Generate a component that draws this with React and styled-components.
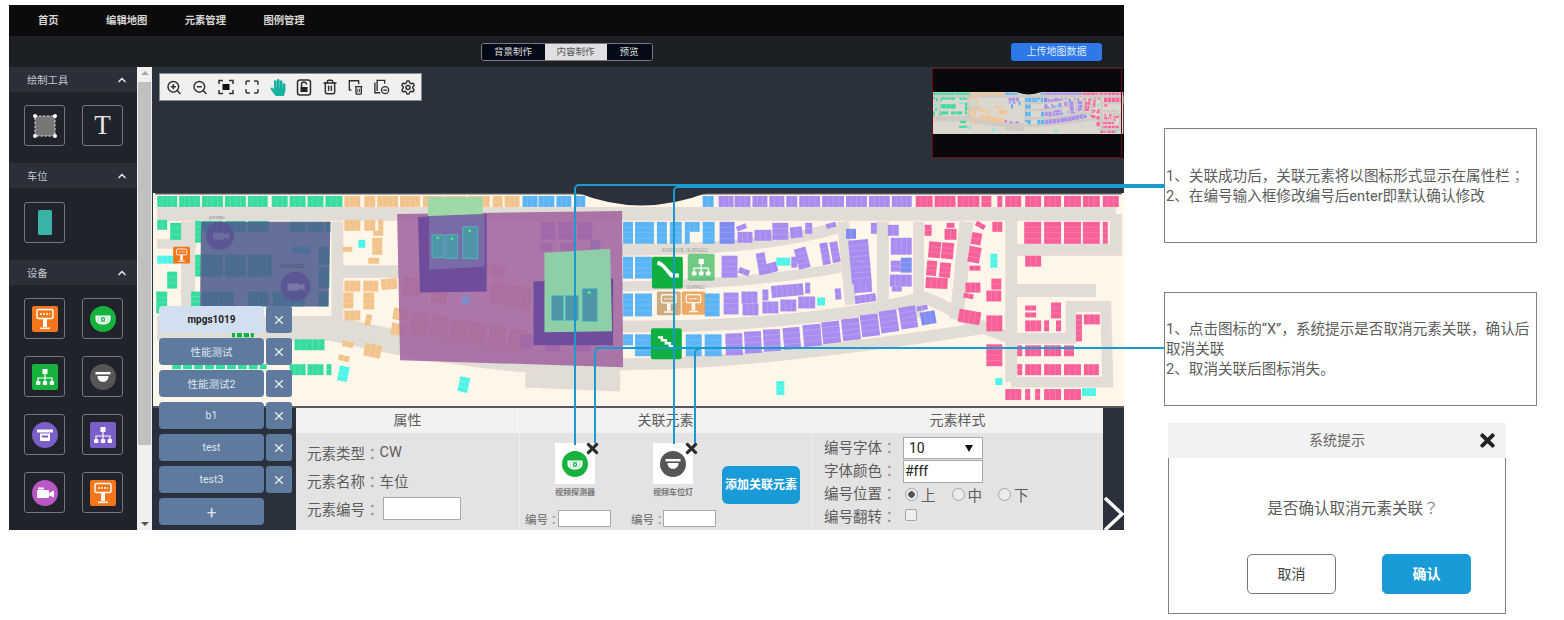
import { Fragment } from 'react'
import styled, { createGlobalStyle } from 'styled-components'
import { ZoomIn, ZoomOut, Maximize, Trash2, Settings, X, ChevronUp } from 'lucide-react'
import { FaHandPaper, FaTimes } from 'react-icons/fa'

const GlobalStyle = createGlobalStyle`
  html, body { margin: 0; padding: 0; background: #fff; overflow: hidden; }
  * { box-sizing: border-box; }
  body { font-family: Roboto, "Noto Sans CJK SC", sans-serif; }
`

const Page = styled.div`
  position: relative;
  width: 1564px;
  height: 620px;
  display: flex;
  align-items: flex-start;
  padding: 5px 0 0 9px;
`

const AppWindow = styled.div`
  width: 1115px;
  height: 525px;
  display: flex;
  flex-direction: column;
  overflow: hidden;
  flex: none;
`

const TopNav = styled.div`
  height: 31px;
  background: #0b0b0b;
  display: flex;
  align-items: center;
  gap: 37.5px;
  padding: 0 0 2px 29px;
  flex: none;
`

const NavItem = styled.div`
  color: #d6d6d6;
  font-size: 10.3px;
  font-weight: 700;
  &:first-child { margin-right: 10px; }
`

const SubBar = styled.div`
  height: 31px;
  background: #1c1f24;
  display: grid;
  grid-template-columns: 1fr auto 1fr;
  align-items: center;
  flex: none;
`

const Segments = styled.div`
  grid-column: 2;
  display: flex;
  height: 18px;
  border: 1px solid #77797e;
  border-radius: 3px;
  overflow: hidden;
`

const Segment = styled.div`
  width: ${p => p.$w}px;
  background: ${p => (p.$on ? '#e0e0e2' : '#040a16')};
  color: ${p => (p.$on ? '#555' : '#ddd')};
  font-size: 9.5px;
  line-height: 16px;
  text-align: center;
`

const UploadButton = styled.div`
  justify-self: end;
  width: 91px;
  height: 18px;
  margin-right: 22px;
  border-radius: 3px;
  background: #2f78e8;
  color: #dfe9fb;
  font-size: 10px;
  line-height: 18px;
  text-align: center;
`

const Main = styled.div`
  flex: 1;
  display: flex;
  min-height: 0;
`

const Sidebar = styled.div`
  width: 128px;
  background: #20232b;
  overflow: hidden;
  flex: none;
`

const SectionHead = styled.div`
  height: 25px;
  background: #2b2f3a;
  color: #c4c6cb;
  font-size: 10.3px;
  display: flex;
  align-items: center;
  justify-content: space-between;
  padding: 0 9px 0 18px;
`

const TileGrid = styled.div`
  display: grid;
  grid-template-columns: 41px 41px;
  column-gap: 17px;
  row-gap: 17px;
  padding: ${p => p.$top || 13}px 0 17px 15px;
`

const Tile = styled.div`
  width: 41px;
  height: 41px;
  border: 1px solid #75777c;
  border-radius: 3px;
  display: flex;
  align-items: center;
  justify-content: center;
  color: #e4e4e4;
  font-family: "Liberation Serif", serif;
  font-size: 27px;
  line-height: 1;
`

const Scrollbar = styled.div`
  width: 15px;
  background: #f0f0f0;
  display: flex;
  flex-direction: column;
  align-items: center;
  flex: none;
  padding-top: 4px;
`

const ScrollUp = styled.div`
  width: 0;
  height: 0;
  border-left: 4px solid transparent;
  border-right: 4px solid transparent;
  border-bottom: 4px solid #a8a8a8;
`

const ScrollThumb = styled.div`
  width: 13px;
  height: 363px;
  margin-top: 7px;
  background: #c0c0c0;
`

const ScrollDown = styled.div`
  width: 0;
  height: 0;
  margin-top: 77px;
  border-left: 4px solid transparent;
  border-right: 4px solid transparent;
  border-top: 4px solid #555;
`

const Canvas = styled.div`
  position: relative;
  flex: 1;
  background: #2b303d;
  padding: 126px 0 0 1px;
  display: flex;
  flex-direction: column;
  min-width: 0;
`

const Toolbar = styled.div`
  position: absolute;
  left: 7px;
  top: 6px;
  width: 263px;
  height: 28px;
  background: #f0f0f0;
  border: 1px solid #8b8b8b;
  display: flex;
  align-items: center;
  justify-content: space-between;
  padding: 0 5px 0 6px;
  color: #2f2f2f;
`

const ToolSlot = styled.div`
  width: 16px;
  height: 18px;
  display: flex;
  align-items: center;
  justify-content: center;
  flex: none;
`

const MiniMap = styled.div`
  position: absolute;
  left: 780px;
  top: 1px;
  width: 192px;
  height: 90px;
  background: #07080b;
  display: flex;
  align-items: center;
  &::after {
    content: '';
    position: absolute;
    left: 0;
    top: 0;
    right: 2px;
    bottom: 0;
    border: 1px solid #6a0c10;
  }
`

const MapFrame = styled.div`
  height: 215px;
  flex: none;
  background: #fff6ea;
  border-bottom: 2px solid #55565a;
  svg { display: block; }
`

const BottomRow = styled.div`
  flex: 1;
  display: flex;
  align-items: flex-end;
  padding-left: 143px;
  min-height: 0;
`

const Panel = styled.div`
  width: 807px;
  height: 122px;
  display: grid;
  grid-template-columns: 223px 292px 292px;
  color: #5c5c5c;
  font-size: 14.5px;
  flex: none;
`

const PanelColumn = styled.div`
  background: #e3e3e3;
  border-left: ${p => (p.$first ? 'none' : '1px solid #efefef')};
  min-width: 0;
`

const PanelTitle = styled.div`
  height: 25px;
  background: #f2f2f2;
  font-size: 14px;
  line-height: 24px;
  text-align: center;
`

const Colon = styled.span`
  font-family: "Noto Sans CJK TC", sans-serif;
  color: #8a8a8a;
`

const InfoBody = styled.div`
  padding: 5px 0 0 11px;
`

const InfoRow = styled.div`
  height: 28px;
  display: flex;
  align-items: center;
`

const Field = styled.div`
  width: ${p => p.$w}px;
  height: ${p => p.$h}px;
  margin-left: ${p => p.$ml || 0}px;
  background: #fff;
  border: 1px solid #a9a9a9;
  color: #222;
  font-size: 14px;
  line-height: ${p => p.$h - 2}px;
  padding-left: ${p => p.$pad || 0}px;
  flex: none;
  display: flex;
  align-items: center;
  justify-content: space-between;
`

const LinkedBody = styled.div`
  position: relative;
  height: 97px;
  display: flex;
  padding: 10px 0 0 5px;
`

const LinkedItem = styled.div`
  width: 106px;
  display: flex;
  flex-direction: column;
  flex: none;
`

const ThumbBox = styled.div`
  position: relative;
  width: 40px;
  height: 41px;
  margin-left: ${p => p.$ml}px;
  background: #fff;
  display: flex;
  align-items: center;
  justify-content: center;
`

const ThumbClose = styled(FaTimes)`
  position: absolute;
  right: ${p => p.$r}px;
  top: -3px;
  font-size: 17px;
  color: #2d2d2d;
`

const ThumbLabel = styled.div`
  width: 44px;
  margin: 3px 0 0 ${p => p.$ml}px;
  font-size: 8px;
  line-height: 12px;
  font-weight: 700;
  color: #777;
  text-align: center;
  white-space: nowrap;
`

const CodeRow = styled.div`
  display: flex;
  align-items: center;
  margin-top: 11px;
  font-size: 11.5px;
  color: #666;
  white-space: nowrap;
`

const AddButton = styled.div`
  position: absolute;
  left: 202px;
  top: 33px;
  width: 78px;
  height: 38px;
  border-radius: 6px;
  background: #189bd6;
  color: #fff;
  font-size: 12px;
  font-weight: 700;
  line-height: 38px;
  text-align: center;
  white-space: nowrap;
`

const StyleBody = styled.div`
  padding: 4px 0 0 12px;
`

const StyleRow = styled.div`
  height: ${p => p.$h}px;
  display: flex;
  align-items: center;
`

const StyleLabel = styled.div`
  width: 79px;
  padding-bottom: 4px;
  flex: none;
`

const Caret = styled.span`
  width: 0;
  height: 0;
  margin-right: 9px;
  border-left: 4px solid transparent;
  border-right: 4px solid transparent;
  border-top: 7px solid #111;
`

const Radio = styled.span`
  width: 13px;
  height: 13px;
  border-radius: 50%;
  border: 1px solid #a6a6a6;
  background: ${p => (p.$on ? 'radial-gradient(circle, #555 0 3px, #ececec 3.5px)' : '#ececec')};
  margin: 0 3px 0 ${p => p.$left}px;
  flex: none;
`

const CheckBox = styled.span`
  width: 12px;
  height: 12px;
  border-radius: 2px;
  border: 1px solid #a6a6a6;
  background: #efefef;
  margin-left: 2px;
  margin-top: -4px;
`

const NextArrow = styled.svg`
  width: 21px;
  height: 33px;
  flex: none;
`

const LayerList = styled.div`
  position: absolute;
  left: 7px;
  top: 239px;
  display: grid;
  grid-template-columns: 105px 26px;
  column-gap: 2px;
  grid-auto-rows: 27px;
  row-gap: 5px;
`

const LayerName = styled.div`
  border-radius: 4px;
  background: ${p => (p.$on ? '#d2dff0' : '#5f7a9f')};
  color: ${p => (p.$on ? '#222' : '#dfe5ee')};
  font-size: ${p => p.$size || 10.5}px;
  font-weight: ${p => (p.$on ? 700 : 400)};
  display: flex;
  align-items: center;
  justify-content: center;
`

const LayerDelete = styled.div`
  border-radius: 3px;
  background: #5f7a9f;
  color: #eef1f5;
  display: flex;
  align-items: center;
  justify-content: center;
`

const Notes = styled.div`
  width: 373px;
  margin: 123px 0 0 40px;
  display: flex;
  flex-direction: column;
  flex: none;
`

const Note = styled.div`
  width: 373px;
  height: ${p => p.$h}px;
  margin-bottom: ${p => p.$mb}px;
  border: 1px solid #808080;
  display: flex;
  align-items: center;
  padding: 0 1px;
  font-size: 14.6px;
  line-height: 20px;
  color: #5c5c5c;
`

const Dialog = styled.div`
  width: 338px;
  margin-left: 4px;
`

const DialogHead = styled.div`
  position: relative;
  height: 35px;
  background: #f2f2f2;
  color: #666;
  font-size: 14px;
  line-height: 35px;
  text-align: center;
`

const DialogClose = styled(FaTimes)`
  position: absolute;
  right: 8px;
  top: 7px;
  font-size: 21px;
  color: #222;
`

const DialogBody = styled.div`
  height: 156px;
  border: 1px solid #808080;
  border-top: none;
  display: flex;
  flex-direction: column;
  align-items: center;
  padding: 37px 0 0 32px;
  color: #5c5c5c;
  font-size: 15.6px;
  line-height: 24px;
`

const DialogActions = styled.div`
  display: flex;
  gap: 46px;
  margin: 33px 0 0 12px;
`

const DialogButton = styled.div`
  width: 89px;
  height: 40px;
  border-radius: 5px;
  border: 1px solid ${p => (p.$primary ? '#189bd6' : '#777')};
  background: ${p => (p.$primary ? '#189bd6' : '#fff')};
  color: ${p => (p.$primary ? '#fff' : '#444')};
  font-size: 14px;
  font-weight: ${p => (p.$primary ? 700 : 400)};
  line-height: 38px;
  text-align: center;
`

const CallLines = styled.svg`
  position: absolute;
  left: 0;
  top: 0;
  pointer-events: none;
`

/* parking blocks, page coordinates: x, y, w, h, rotation */
const greens = [
  [155,196,20,11],[177,196,21,11],[200,196,21,11],[223,196,21,11],[246,196,20,11],[270,196,16,11],[288,196,16,11],[306,196,16,11],[324,196,17,11],
  [155,220,10,10],[168,223,11,17],[193,221,6,22],[193,255,6,22],[200,221,21,11],[223,221,21,11],[246,221,21,11],[288,222,16,10],[306,222,16,10],[324,222,5,10],
  [200,255,21,22],[223,255,21,22],[246,255,24,22],[317,247,11,18],[317,267,11,21],[200,292,32,15],[246,292,21,15],[271,292,15,15],[287,292,16,15],[317,292,10,15],
  [165,272,10,17],[154,292,11,22],[189,292,9,20],[293,340,30,11],[288,365,16,11],[306,365,16,11],[325,365,5,11],
]
const oranges = [
  [343,196,16,11],[363,196,11,11],[376,196,21,11],[399,196,20,11],[422,196,20,11],[443,196,22,11],[467,196,22,11],[492,196,10,11],[504,196,15,11],
  [343,220,16,11],[363,220,11,11],[377,220,5,11],[372,231,10,5],[371,238,10,17],[367,258,11,6],[341,247,10,5],[343,281,16,11],[362,281,15,11],[380,279,16,11,-6],
  [342,293,10,16],[362,293,11,17],[343,311,16,10],[364,315,6,11,12],[341,342,11,6,12],[337,356,11,6,12],[363,345,17,13,12],
  [392,309,14,12,10],[390,324,14,12,10],[410,313,17,23,8],[430,316,17,23,8],[450,320,17,23,8],[468,323,17,23,8],[488,326,17,23,8],[508,330,17,23,8],
  [402,277,18,20,5],[430,290,16,14,5],[470,262,18,12,5],[490,266,14,12,5],[490,284,30,22,6],[520,287,10,24],
]
const blues = [
  [522,196,15,11],[538,196,16,11],[556,196,15,11],[574,196,11,11],[703,196,11,11],
  [623,222,10,22],[635,222,19,22],[657,222,10,22],[670,222,12,22],[685,222,15,10],[685,232,5,12],[703,222,12,22],
  [623,257,10,22],[635,257,17,22],[623,294,10,23],[635,294,17,23],[705,294,15,23],[623,335,10,11],[635,335,17,22],[686,335,16,22],[705,335,17,22],[552,255,10,22],[590,240,10,20],
]
const purples = [
  [719,196,15,11],[735,196,16,11],[753,196,15,11],[770,196,15,11],[787,196,11,11],[800,196,21,11],[823,196,22,11],[847,196,21,11],[870,196,21,11],[893,196,20,11],
  [737,225,10,5,-20],[738,232,15,11],[755,230,17,11],[773,223,16,17],[791,227,12,11,-6],[806,223,7,11],[827,223,10,5,-15],
  [722,256,16,22],[739,269,11,6,20],[758,253,9,22,-10],[767,263,11,10,-15],[792,257,6,11],[797,248,12,21,-15],[822,243,8,22,-10],[832,242,8,21,-10],
  [724,293,15,22],[742,292,16,12],[743,304,16,12],[763,290,6,11],[763,302,16,12],[781,300,16,12],[799,297,17,12],[772,285,32,12,-5],[806,283,5,11],[836,289,6,11,-5],
  [726,334,17,22,-2],[745,332,17,22,-3],[764,330,17,22,-3],[784,328,17,22,-5],[804,325,18,22,-5],[823,322,18,22,-6],[843,319,18,22,-6],[862,315,18,22,-7],[881,311,18,22,-8],[901,307,17,22,-9],[918,306,11,5,-12],
  [872,223,6,11],[850,240,20,22,-5],[852,262,20,22,-5],[855,283,18,10,-5],[856,295,21,8,-8],[889,225,11,11],[892,238,21,17],[892,261,10,11],[891,275,22,12],[893,287,10,5],
  [540,222,15,18],[558,222,15,18],[577,222,15,18],[540,243,12,8],[560,243,14,10],[520,335,12,14],[545,342,15,10],[575,342,16,10],
]
const deepBlues = [[720,222,15,22],[847,229,10,10],[902,258,11,15],[922,312,15,13,-10]]
const pinks = [
  [917,196,17,11],[936,196,21,11],[959,196,22,11],[983,196,10,11],[999,196,5,11],[1007,196,16,11],[1027,196,16,11],[1046,196,17,11],[1066,196,17,11],[1085,196,17,11],[1105,196,16,11],
  [926,225,7,11],[948,223,8,5],[946,229,12,11],[930,242,12,16,5],[943,243,12,16,5],[928,261,10,15,5],[941,263,11,15,5],[927,278,22,11,3],
  [973,233,10,12,10],[970,247,12,16,10],[971,266,11,5],[977,223,10,5,30],[994,222,10,10],[967,283,15,10],[965,294,10,5,10],[993,279,10,11],[988,291,15,11],[960,311,22,13,10],[988,316,16,16],[988,345,16,22],
  [1026,222,17,22],[1046,222,17,22],[1066,222,17,22],[1085,222,17,22],[1105,222,5,22],[1027,256,16,11],[1027,306,11,5],[1027,313,11,5],[1027,321,16,11],[1046,321,5,11],[1053,303,10,16],[1058,321,5,11],[1078,315,6,27],[1086,315,16,10],
  [1019,346,5,11],[1027,346,16,11],[1046,346,17,11],[1066,346,10,11],[1019,365,5,11],[1027,365,16,11],[1046,365,17,11],[1066,365,17,11],[1086,365,15,11],
  [1007,390,16,11],[1027,390,5,11],[1037,390,5,11],[1046,390,17,11],[1066,390,17,11],
]
const cyans = [
  [155,256,20,8],[357,240,7,8],[337,367,10,15,12],[458,378,10,15,12],[777,258,14,8],[818,298,8,8],[992,254,7,14],[997,379,7,7],[777,382,8,14],[1084,389,14,8],[290,247,19,7],
]
const roads = [
  ['M155 214H1118', 13],['M1118 214V250H1012', 11],['M1013 214V383', 11],['M1018 291H1098', 12],['M1018 339H1073V307H1108L1110 383H1013', 10],
  ['M620 250C700 250 780 245 838 228', 11],['M620 287C700 285 780 280 842 268', 9],['M620 327C720 328 840 320 925 298C950 305 970 325 1008 337', 11],
  ['M620 365C720 365 850 350 990 328', 11],['M844 222L852 305', 11],['M884 222V312', 11],['M920 222V318', 10],['M968 222L958 320', 13],
  ['M186 222V330', 13],['M336 222V320', 11],['M340 272H398', 12],['M155 329H330C400 345 500 365 620 365', 24],['M525 381L620 385', 14],['M155 244H194', 9],
]

const blockGroup = (list, color, prefix) =>
  list.map(([x, y, w, h, r], i) => {
    const cells = Math.max(1, Math.round(Math.max(w, h) / 5.5))
    const wide = w >= h
    return (
      <g key={prefix + i} transform={r ? `rotate(${r} ${x + w / 2} ${y + h / 2})` : undefined}>
        <rect x={x} y={y} width={w} height={h} fill={color} />
        {Array.from({ length: cells - 1 }, (_, k) =>
          wide ? (
            <line key={k} x1={x + ((k + 1) * w) / cells} x2={x + ((k + 1) * w) / cells} y1={y} y2={y + h} stroke="#fff" strokeOpacity="0.28" strokeWidth="0.6" />
          ) : (
            <line key={k} y1={y + ((k + 1) * h) / cells} y2={y + ((k + 1) * h) / cells} x1={x} x2={x + w} stroke="#fff" strokeOpacity="0.28" strokeWidth="0.6" />
          )
        )}
      </g>
    )
  })

const TealBox = ({ x, y, w, h }) => <rect x={x} y={y} width={w} height={h} fill="#4f95a8" stroke="#4cc0c8" strokeWidth="0.8" />

function MapOverlays() {
  return (
    <>
      <polygon points="199,222 329,222 327,307 198,307" fill="#4f5c8e" fillOpacity="0.88" />
      <text x="278" y="268" fontSize="5.5" fill="#4a4f6a" fontFamily="Roboto, sans-serif">A1010002</text>
      <text x="207" y="219" fontSize="3.5" fill="#777" fontFamily="Roboto, sans-serif">A1010001</text>
      <circle cx="218" cy="236" r="14" fill="#5a4f92" fillOpacity="0.75" />
      <path d="M211 233h11v7h-11zM222 235l5-2v7l-5-2z" fill="#6b6da0" />
      <circle cx="294" cy="287" r="15" fill="#5a4f92" fillOpacity="0.75" />
      <path d="M286 284h12v7h-12zM298 286l5-2v7l-5-2z" fill="#7777a8" />

      <polygon points="396,214 622,211 623,368 399,361" fill="#a0649f" fillOpacity="0.88" />
      <polygon points="417,217 486,214 486,292 419,293" fill="#6f4d9c" />
      <polygon points="428,216 484,214 484,267 428,270" fill="#7a6aa6" />
      <polygon points="427,197 482,197 482,214 427,216" fill="#9fd9a8" />
      <TealBox x={431} y={235} w={12} h={23} />
      <TealBox x={445} y={235} w={12} h={24} />
      <TealBox x={462} y={227} w={15} h={32} />
      <circle cx="437" cy="238" r="1.4" fill="#5fe07a" />
      <circle cx="451" cy="239" r="1.4" fill="#5fe07a" />
      <circle cx="469" cy="231" r="1.6" fill="#5fe07a" />
      <polygon points="533,282 613,279 613,346 533,346" fill="#6f4d9c" />
      <polygon points="544,253 610,249 612,332 544,333" fill="#8fcfa8" />
      <TealBox x={551} y={296} w={12} h={25} />
      <TealBox x={565} y={296} w={13} h={25} />
      <TealBox x={582} y={289} w={15} h={33} />
      <circle cx="589" cy="293" r="1.8" fill="#5fe07a" />
      <rect x="461" y="296" width="8" height="9" fill="#7f8cc8" />

      <rect x="230" y="332" width="22" height="6" fill="#10b040" />
      <path d="M234 332v6M241 332v6M248 332v6" stroke="#fff" strokeWidth="1.5" />
      <path d="M170 367.5H265" stroke="#36dca0" strokeWidth="5" strokeDasharray="9 2" />

      <g transform="translate(171 247) scale(0.65)"><KioskIcon color="#f5761a" /></g>
      <text x="662" y="252" fontSize="4.5" fill="#999" fontFamily="Roboto, sans-serif">A1408YCB, 16-5PGLG2</text>
      <text x="686" y="289" fontSize="4.5" fill="#999" fontFamily="Roboto, sans-serif">16-PING2</text>
      <g opacity="0.6" transform="translate(688 254) scale(1.04)"><NetworkIcon color="#10b040" /></g>
      <g opacity="0.55" transform="translate(657 292) scale(0.92)"><KioskIcon color="#a7702e" /></g>
      <g opacity="0.7" transform="translate(682 292) scale(0.9)"><KioskIcon color="#e88a2c" /></g>
      <rect x="652" y="257" width="31" height="32" rx="2" fill="#10b040" />
      <path d="M657 265c5 0 10 9 14 13h8v-4h-6c-4-3-9-12-15-13z" fill="#fff" />
      <rect x="651" y="329" width="31" height="31" rx="2" fill="#10b040" />
      <path d="M658 338h4v3h4v3h4v3h4v3" fill="none" stroke="#fff" strokeWidth="2.4" />
    </>
  )
}

function MapDrawing({ width, height, plain }) {
  return (
    <svg width={width} height={height} viewBox="153 193 971 214">
      <rect x="153" y="193" width="971" height="214" fill={plain ? '#dcd8cf' : '#fff6ea'} />
      {!plain && <rect x="153" y="193" width="971" height="1.5" fill="#55565a" />}
      {roads.map(([d, w], i) => (
        <path key={'o' + i} d={d} fill="none" stroke={plain ? '#cfcbc4' : '#fbd6cc'} strokeWidth={w + 1} />
      ))}
      {roads.map(([d, w], i) => (
        <path key={'r' + i} d={d} fill="none" stroke={plain ? '#cfcbc4' : '#e0dcd6'} strokeWidth={w} />
      ))}
      <path d="M578 193Q640 218 707 193Z" fill={plain ? '#07080b' : '#2b303d'} />
      {blockGroup(greens, '#36dca0', 'g')}
      {blockGroup(oranges, '#f2c48c', 'o')}
      {blockGroup(blues, '#5ab4f5', 'b')}
      {blockGroup(purples, '#a98cf0', 'p')}
      {blockGroup(deepBlues, '#7f8cf2', 'd')}
      {blockGroup(pinks, '#f8609a', 'k')}
      {blockGroup(cyans, '#4ef5e6', 'c')}
      {!plain && <MapOverlays />}
    </svg>
  )
}

function KioskIcon({ color }) {
  return (
    <>
      <rect width="26" height="26" rx="2" fill={color} />
      <rect x="5" y="3.5" width="16" height="9" rx="1.5" fill="none" stroke="#fff" strokeWidth="1.4" />
      <path d="M8 8h10" stroke="#fff" strokeWidth="1.4" strokeDasharray="2 1" />
      <path d="M11 13h4v8h-4z" fill="#fff" />
      <path d="M8 21.5h10v1.6H8z" fill="#fff" />
    </>
  )
}

function NetworkIcon({ color }) {
  return (
    <>
      <rect width="26" height="26" rx="2" fill={color} />
      <rect x="10.5" y="5" width="5" height="5" fill="#fff" />
      <path d="M13 10v4M6 17v-3h14v3M13 14v3" fill="none" stroke="#fff" strokeWidth="1.2" />
      <rect x="4" y="17" width="4.4" height="4" rx="1" fill="#fff" />
      <rect x="10.8" y="17" width="4.4" height="4" rx="1" fill="#fff" />
      <rect x="17.6" y="17" width="4.4" height="4" rx="1" fill="#fff" />
    </>
  )
}

const DeviceSvg = ({ size = 26, children }) => (
  <svg width={size} height={size} viewBox="0 0 26 26">{children}</svg>
)

const Kiosk = ({ color }) => <DeviceSvg><KioskIcon color={color} /></DeviceSvg>
const Network = ({ color }) => <DeviceSvg><NetworkIcon color={color} /></DeviceSvg>

const CameraDome = ({ size }) => (
  <DeviceSvg size={size}>
    <circle cx="13" cy="13" r="13" fill="#17b23e" />
    <path d="M5.5 9.5h15v3.5c0 3.6-3 5.500-7.500 5.500S5.500 16.600 5.500 13z" fill="#fff" />
    <rect x="8" y="11" width="10" height="5" rx="1" fill="none" stroke="#7fd6a0" strokeWidth="0.8" />
    <circle cx="13" cy="13.5" r="2.2" fill="#17b23e" />
    <circle cx="13" cy="13.5" r="0.9" fill="#fff" />
  </DeviceSvg>
)

const GrayDome = ({ size }) => (
  <DeviceSvg size={size}>
    <circle cx="13" cy="13" r="13" fill="#565656" />
    <rect x="5.5" y="8" width="15" height="2.4" fill="#fff" />
    <path d="M7.5 12h11c0 3.6-2.4 5.8-5.5 5.8S7.5 15.6 7.5 12z" fill="#fff" />
  </DeviceSvg>
)

const PurpleGate = () => (
  <DeviceSvg>
    <circle cx="13" cy="13" r="13" fill="#7b5fc9" />
    <rect x="5" y="7.5" width="16" height="3" fill="#fff" />
    <path d="M8 11.5h10v6.500a1 1 0 0 1-1 1H9a1 1 0 0 1-1-1z" fill="#fff" />
    <rect x="10" y="13.5" width="6" height="2" fill="#7b5fc9" />
  </DeviceSvg>
)

const VideoCam = () => (
  <DeviceSvg>
    <circle cx="13" cy="13" r="13" fill="#b957c4" />
    <rect x="5" y="10" width="12" height="8" rx="1" fill="#fff" />
    <path d="M17 13l5-2.5v7L17 15.5z" fill="#fff" />
    <rect x="6" y="7.5" width="6" height="2" fill="#fff" />
  </DeviceSvg>
)

const SelectShape = () => (
  <svg width="26" height="26" viewBox="0 0 26 26">
    <rect x="3" y="3" width="20" height="20" fill="#777" stroke="#ddd" strokeDasharray="2.5 1.5" />
    {[[3, 3], [23, 3], [3, 23], [23, 23]].map(([cx, cy]) => (
      <circle key={cx + '-' + cy} cx={cx} cy={cy} r="2" fill="#fff" />
    ))}
  </svg>
)

const SlotShape = () => (
  <svg width="14" height="25" viewBox="0 0 14 25">
    <rect width="14" height="25" rx="1.5" fill="#38b3a6" />
  </svg>
)

const FitIcon = () => (
  <svg width="16" height="16" viewBox="0 0 16 16" fill="none" stroke="#2f2f2f" strokeWidth="1.5">
    <path d="M1 5V1.5H5M11 1.5H15V5M15 11V14.5H11M5 14.5H1V11" />
    <rect x="4.5" y="5" width="7" height="6" fill="#111" stroke="none" />
  </svg>
)

const LockIcon = () => (
  <svg width="16" height="17" viewBox="0 0 16 17" fill="none" stroke="#2f2f2f" strokeWidth="1.5">
    <rect x="1.5" y="1" width="13" height="15" rx="2.5" />
    <path d="M5.5 8V5.5a2.5 2.5 0 0 1 5 0" />
    <rect x="4.5" y="8" width="7" height="5" fill="#222" stroke="none" />
  </svg>
)

const CopyTrashIcon = () => (
  <svg width="18" height="18" viewBox="0 0 18 18" fill="none" stroke="#2f2f2f" strokeWidth="1.5">
    <path d="M4 12.5H1.5V2H12V6" />
    <path d="M8 8.5h8M9 9v7a1 1 0 0 0 1 1h4a1 1 0 0 0 1-1V9" />
    <path d="M11 11v4M13 11v4" strokeWidth="1" />
  </svg>
)

const CopyMinusIcon = () => (
  <svg width="18" height="18" viewBox="0 0 18 18" fill="none" stroke="#2f2f2f" strokeWidth="1.5">
    <path d="M3.5 13.5V1.5H12V5" />
    <path d="M1 4v11.5h6" />
    <circle cx="12.5" cy="12.5" r="4" />
    <path d="M10.5 12.5h4" />
  </svg>
)

const ToolIcons = () => (
  <>
    <ToolSlot><ZoomIn size={17} strokeWidth={2.2} /></ToolSlot>
    <ToolSlot><ZoomOut size={17} strokeWidth={2.2} /></ToolSlot>
    <ToolSlot><FitIcon /></ToolSlot>
    <ToolSlot><Maximize size={16} strokeWidth={2.2} /></ToolSlot>
    <ToolSlot><FaHandPaper size={17} color="#17b3a0" /></ToolSlot>
    <ToolSlot><LockIcon /></ToolSlot>
    <ToolSlot><Trash2 size={16} strokeWidth={2.2} /></ToolSlot>
    <ToolSlot><CopyTrashIcon /></ToolSlot>
    <ToolSlot><CopyMinusIcon /></ToolSlot>
    <ToolSlot><Settings size={17} strokeWidth={2.2} /></ToolSlot>
  </>
)

const Section = ({ title, top, children }) => (
  <>
    <SectionHead>
      {title}
      <ChevronUp size={12} strokeWidth={3.5} color="#ddd" />
    </SectionHead>
    <TileGrid $top={top}>{children}</TileGrid>
  </>
)

const layers = ['性能测试', '性能测试2', 'b1', 'test', 'test3']

export default function App() {
  return (
    <Page>
      <GlobalStyle />
      <AppWindow>
        <TopNav>
          <NavItem>首页</NavItem>
          <NavItem>编辑地图</NavItem>
          <NavItem>元素管理</NavItem>
          <NavItem>图例管理</NavItem>
        </TopNav>
        <SubBar>
          <Segments>
            <Segment $w={63}>背景制作</Segment>
            <Segment $w={62} $on>内容制作</Segment>
            <Segment $w={45}>预览</Segment>
          </Segments>
          <UploadButton>上传地图数据</UploadButton>
        </SubBar>
        <Main>
          <Sidebar>
            <Section title="绘制工具">
              <Tile><SelectShape /></Tile>
              <Tile>T</Tile>
            </Section>
            <Section title="车位" top={14}>
              <Tile><SlotShape /></Tile>
            </Section>
            <Section title="设备">
              <Tile><Kiosk color="#f5761a" /></Tile>
              <Tile><CameraDome /></Tile>
              <Tile><Network color="#17b23e" /></Tile>
              <Tile><GrayDome /></Tile>
              <Tile><PurpleGate /></Tile>
              <Tile><Network color="#7b5fc9" /></Tile>
              <Tile><VideoCam /></Tile>
              <Tile><Kiosk color="#f5761a" /></Tile>
            </Section>
          </Sidebar>
          <Scrollbar>
            <ScrollUp />
            <ScrollThumb />
            <ScrollDown />
          </Scrollbar>
          <Canvas>
            <Toolbar><ToolIcons /></Toolbar>
            <MiniMap><MapDrawing width={192} height={42} plain /></MiniMap>
            <MapFrame><MapDrawing width={971} height={213} /></MapFrame>
            <LayerList>
              <LayerName $on $size={10}>mpgs1019</LayerName>
              <LayerDelete><X size={14} /></LayerDelete>
              {layers.map(name => (
                <Fragment key={name}>
                  <LayerName>{name}</LayerName>
                  <LayerDelete><X size={14} /></LayerDelete>
                </Fragment>
              ))}
              <LayerName $size={17}>+</LayerName>
            </LayerList>
            <BottomRow>
              <Panel>
                <PanelColumn $first>
                  <PanelTitle>属性</PanelTitle>
                  <InfoBody>
                    <InfoRow>元素类型<Colon>：</Colon>CW</InfoRow>
                    <InfoRow>元素名称<Colon>：</Colon>车位</InfoRow>
                    <InfoRow>元素编号<Colon>：</Colon><Field $w={78} $h={23} $ml={3} /></InfoRow>
                  </InfoBody>
                </PanelColumn>
                <PanelColumn>
                  <PanelTitle>关联元素</PanelTitle>
                  <LinkedBody>
                    <LinkedItem>
                      <ThumbBox $ml={30}><CameraDome /><ThumbClose $r={-6} /></ThumbBox>
                      <ThumbLabel $ml={28}>视频探测器</ThumbLabel>
                      <CodeRow>编号<Colon>：</Colon><Field $w={53} $h={17} $ml={-2} /></CodeRow>
                    </LinkedItem>
                    <LinkedItem>
                      <ThumbBox $ml={22}><GrayDome /><ThumbClose $r={-7} /></ThumbBox>
                      <ThumbLabel $ml={20}>视频车位灯</ThumbLabel>
                      <CodeRow>编号<Colon>：</Colon><Field $w={53} $h={17} $ml={-3} /></CodeRow>
                    </LinkedItem>
                    <AddButton>添加关联元素</AddButton>
                  </LinkedBody>
                </PanelColumn>
                <PanelColumn>
                  <PanelTitle>元素样式</PanelTitle>
                  <StyleBody>
                    <StyleRow $h={22}>
                      <StyleLabel>编号字体<Colon>：</Colon></StyleLabel>
                      <Field $w={80} $h={22} $pad={5}>10<Caret /></Field>
                    </StyleRow>
                    <StyleRow $h={24}>
                      <StyleLabel>字体颜色<Colon>：</Colon></StyleLabel>
                      <Field $w={80} $h={23} $pad={1}>#fff</Field>
                    </StyleRow>
                    <StyleRow $h={23}>
                      <StyleLabel>编号位置<Colon>：</Colon></StyleLabel>
                      <Radio $on $left={2} />上
                      <Radio $left={16} />中
                      <Radio $left={16} />下
                    </StyleRow>
                    <StyleRow $h={22}>
                      <StyleLabel>编号翻转<Colon>：</Colon></StyleLabel>
                      <CheckBox />
                    </StyleRow>
                  </StyleBody>
                </PanelColumn>
              </Panel>
              <NextArrow viewBox="0 0 21 33">
                <path d="M2 1L19 17L2 33" fill="none" stroke="#fff" strokeWidth="3.5" />
              </NextArrow>
            </BottomRow>
          </Canvas>
        </Main>
      </AppWindow>
      <Notes>
        <Note $h={115} $mb={49}>
          <div>
            1、关联成功后，关联元素将以图标形式显示在属性栏<Colon>；</Colon><br />
            2、在编号输入框修改编号后enter即默认确认修改
          </div>
        </Note>
        <Note $h={114} $mb={17}>
          <div>
            1、点击图标的“X”，系统提示是否取消元素关联，确认后取消关联<br />
            2、取消关联后图标消失。
          </div>
        </Note>
        <Dialog>
          <DialogHead>系统提示<DialogClose /></DialogHead>
          <DialogBody>
            <div>是否确认取消元素关联<Colon>？</Colon></div>
            <DialogActions>
              <DialogButton>取消</DialogButton>
              <DialogButton $primary>确认</DialogButton>
            </DialogActions>
          </DialogBody>
        </Dialog>
      </Notes>
      <CallLines width="1564" height="620" viewBox="0 0 1564 620">
        <g fill="none" stroke="#1a9bd0" strokeWidth="2">
          <path d="M1165 185H579a4 4 0 0 0-4 4V445" />
          <path d="M1165 187H678a4 4 0 0 0-4 4V444" />
          <path d="M1165 348H599a4 4 0 0 0-4 4V443" />
          <path d="M700 349a4 4 0 0 0-5 4V443" />
        </g>
      </CallLines>
    </Page>
  )
}
